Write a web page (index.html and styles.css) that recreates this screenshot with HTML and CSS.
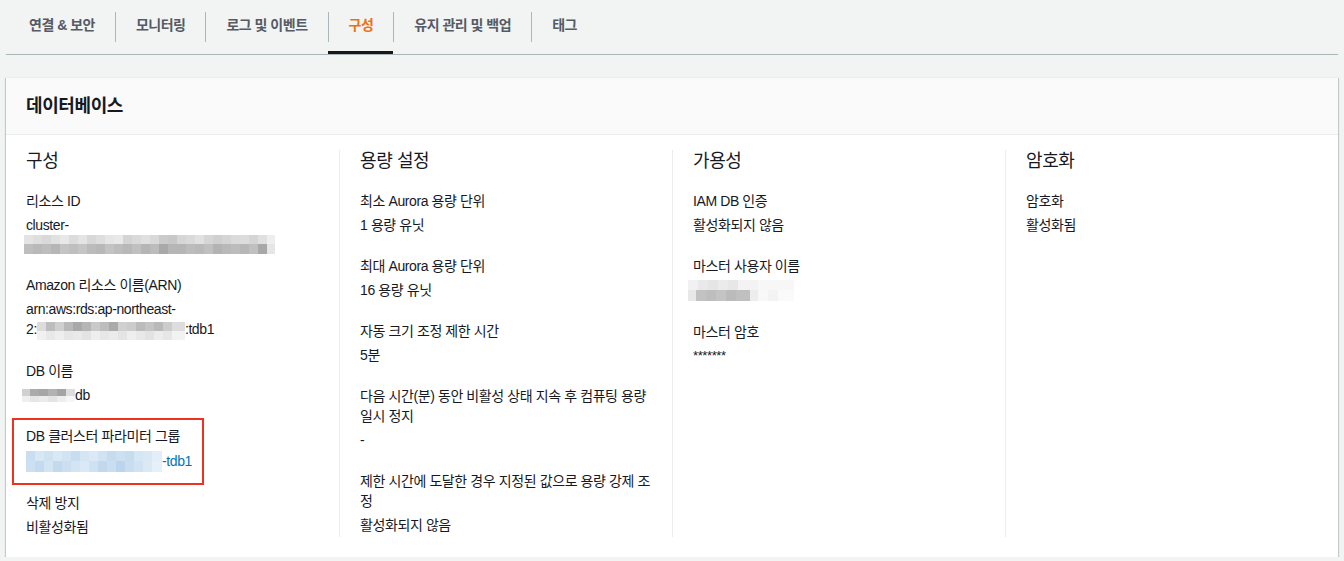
FILE: index.html
```html
<!DOCTYPE html>
<html lang="ko">
<head>
    <meta charset="UTF-8">
    <meta name="viewport" content="width=device-width, initial-scale=1.0">
    <title>구성</title>
    <link rel="stylesheet" href="styles.css">
</head>
<body>
    <div class="page">
        <nav class="tabs">
            <a class="tab"><span class="tab-label">연결 &amp; 보안</span></a>
            <a class="tab"><span class="tab-label">모니터링</span></a>
            <a class="tab"><span class="tab-label">로그 및 이벤트</span></a>
            <a class="tab active"><span class="tab-label">구성</span></a>
            <a class="tab"><span class="tab-label">유지 관리 및 백업</span></a>
            <a class="tab"><span class="tab-label">태그</span></a>
        </nav>

        <section class="panel">
            <header class="panel-header">
                <h2>데이터베이스</h2>
            </header>
            <div class="panel-body">

                <div class="column">
                    <h3 class="column-title">구성</h3>
                    <div class="field">
                        <div class="field-label">리소스 ID</div>
                        <div class="field-value">cluster-<span class="mask mask-cluster"></span></div>
                    </div>
                    <div class="field">
                        <div class="field-label">Amazon 리소스 이름(ARN)</div>
                        <div class="field-value">arn:aws:rds:ap-northeast-<br>2:<span class="mask mask-arn"></span>:tdb1</div>
                    </div>
                    <div class="field">
                        <div class="field-label">DB 이름</div>
                        <div class="field-value"><span class="mask mask-dbname"></span>db</div>
                    </div>
                    <div class="field highlight">
                        <div class="field-label">DB 클러스터 파라미터 그룹</div>
                        <div class="field-value"><a class="link"><span class="mask mask-param"></span>-tdb1</a></div>
                    </div>
                    <div class="field">
                        <div class="field-label">삭제 방지</div>
                        <div class="field-value">비활성화됨</div>
                    </div>
                </div>

                <div class="column">
                    <h3 class="column-title">용량 설정</h3>
                    <div class="field">
                        <div class="field-label">최소 Aurora 용량 단위</div>
                        <div class="field-value">1 용량 유닛</div>
                    </div>
                    <div class="field">
                        <div class="field-label">최대 Aurora 용량 단위</div>
                        <div class="field-value">16 용량 유닛</div>
                    </div>
                    <div class="field">
                        <div class="field-label">자동 크기 조정 제한 시간</div>
                        <div class="field-value">5분</div>
                    </div>
                    <div class="field">
                        <div class="field-label">다음 시간(분) 동안 비활성 상태 지속 후 컴퓨팅 용량 일시 정지</div>
                        <div class="field-value">-</div>
                    </div>
                    <div class="field">
                        <div class="field-label">제한 시간에 도달한 경우 지정된 값으로 용량 강제 조정</div>
                        <div class="field-value">활성화되지 않음</div>
                    </div>
                </div>

                <div class="column">
                    <h3 class="column-title">가용성</h3>
                    <div class="field">
                        <div class="field-label">IAM DB 인증</div>
                        <div class="field-value">활성화되지 않음</div>
                    </div>
                    <div class="field">
                        <div class="field-label">마스터 사용자 이름</div>
                        <div class="field-value"><span class="mask mask-user"></span></div>
                    </div>
                    <div class="field">
                        <div class="field-label">마스터 암호</div>
                        <div class="field-value password">*******</div>
                    </div>
                </div>

                <div class="column">
                    <h3 class="column-title">암호화</h3>
                    <div class="field">
                        <div class="field-label">암호화</div>
                        <div class="field-value">활성화됨</div>
                    </div>
                </div>

            </div>
        </section>
    </div>
</body>
</html>
```

FILE: styles.css
```css
*{
    margin: 0;
    padding: 0;
    box-sizing: border-box;
}
body {
    background-color: #f2f3f3;
    font-family: "Liberation Sans", "Noto Sans CJK KR", sans-serif;
    font-size: 14px;
    letter-spacing: -0.4px;
    color: #16191f;
    font-feature-settings: "palt";
}
.page {
    padding: 0 6px;
}

/* tabs */
.tabs {
    display: flex;
    padding: 8px 0 0 3px;
    border-bottom: 1px solid #aab7b8;
}
.tab {
    display: block;
    padding: 4px 0 12px;
    font-weight: bold;
    letter-spacing: -0.5px;
    color: #545b64;
    cursor: pointer;
}
.tab-label {
    display: block;
    padding: 2px 20px 6px;
    line-height: 22px;
    border-left: 1px solid #aab7b8;
}
.tab:first-child .tab-label {
    border-left: none;
}
.tab.active {
    color: #ec7211;
    box-shadow: inset 0 -3px 0 #16191f;
}

/* panel */
.panel {
    margin-top: 22px;
    background-color: #ffffff;
    border-top: 1px solid #eaeded;
    box-shadow: 0 1px 1px 0 rgba(0, 28, 36, 0.3), 1px 1px 1px 0 rgba(0, 28, 36, 0.15), -1px 1px 1px 0 rgba(0, 28, 36, 0.15);
}
.panel-header {
    background-color: #fafafa;
    padding: 17px 20px;
    border-bottom: 1px solid #eaeded;
}
.panel-header h2 {
    font-size: 18px;
    line-height: 22px;
    font-weight: bold;
}
.panel-body {
    display: grid;
    grid-template-columns: repeat(4, 1fr);
    padding: 15px 0 20px;
}
.column {
    padding: 0 20px;
    border-left: 1px solid #eaeded;
}
.column:first-child {
    border-left: none;
}
.column-title {
    font-size: 18px;
    line-height: 22px;
    font-weight: normal;
    margin-bottom: 19px;
}
.field {
    margin-bottom: 21px;
}
.field:last-child {
    margin-bottom: 0;
}
.field-label {
    line-height: 20px;
    margin-bottom: 4px;
}
.field-value {
    line-height: 20px;
}
.password {
    font-size: 13px;
}
.link {
    color: #0073bb;
    cursor: pointer;
}

/* annotation box */
.highlight {
    width: fit-content;
    margin: -8px 0 8px -14px;
    padding: 6px 10px 11px 12px;
    border: 2px solid #ee3220;
}
.highlight .field-label {
    margin-bottom: 5px;
}

/* blurred values */
.mask {
    display: inline-block;
}
.mask-cluster {
    display: block;
    width: 251px;
    height: 19px;
    margin-left: -2px;
    background:
        linear-gradient(90deg, #e4e4e4 0 9px, #dedede 9px 18px, #d9d9d9 18px 27px, #e1e1e1 27px 36px, #e8e8e8 36px 45px, #dcdcdc 45px 54px, #e4e4e4 54px 63px, #d8d8d8 63px 72px, #dedede 72px 81px, #e6e6e6 81px 90px, #e9e9e9 90px 99px, #d4d4d4 99px 108px, #dadada 108px 117px, #e0e0e0 117px 126px, #d9d9d9 126px 135px, #cbcbcb 135px 144px, #c8c8c8 144px 153px, #d6d6d6 153px 162px, #dadada 162px 171px, #e1e1e1 171px 180px, #d6d6d6 180px 189px, #d0d0d0 189px 198px, #d5d5d5 198px 207px, #dbdbdb 207px 216px, #dcdcdc 216px 225px, #d5d5d5 225px 234px, #e0e0e0 234px 243px, #eeeeee 243px 251px) top / 100% 9px no-repeat,
        linear-gradient(90deg, #bebebe 0 9px, #b9b9b9 9px 18px, #bdbdbd 18px 27px, #b6b6b6 27px 36px, #c4c4c4 36px 45px, #bfbfbf 45px 54px, #c5c5c5 54px 63px, #bbbbbb 63px 72px, #b8b8b8 72px 81px, #c3c3c3 81px 90px, #bdbdbd 90px 99px, #b8b8b8 99px 108px, #c0c0c0 108px 117px, #b5b5b5 117px 126px, #bcbcbc 126px 135px, #a9a9a9 135px 144px, #b6b6b6 144px 153px, #b5b5b5 153px 162px, #bcbcbc 162px 171px, #b9b9b9 171px 180px, #c0c0c0 180px 189px, #b3b3b3 189px 198px, #b9b9b9 198px 207px, #bcbcbc 207px 216px, #b7b7b7 216px 225px, #c0c0c0 225px 234px, #a8a8a8 234px 243px, #e6e6e6 243px 251px) bottom / 100% 10px no-repeat;
}
.mask-arn {
    width: 148px;
    height: 18px;
    vertical-align: -6px;
    background:
        linear-gradient(90deg, #dcdcdc 0 9px, #bdbdbd 9px 18px, #cfcfcf 18px 27px, #b9b9b9 27px 36px, #a9a9a9 36px 45px, #b5b5b5 45px 54px, #c9c9c9 54px 63px, #bdbdbd 63px 72px, #aaaaaa 72px 81px, #d0d0d0 81px 90px, #cbcbcb 90px 99px, #bbbbbb 99px 108px, #c4c4c4 108px 117px, #b9b9b9 117px 126px, #cccccc 126px 135px, #dddddd 135px 148px) top / 100% 9px no-repeat,
        linear-gradient(90deg, #f0f0f0 0 9px, #e8e8e8 9px 18px, #eeeeee 18px 27px, #e6e6e6 27px 36px, #e9e9e9 36px 45px, #e3e3e3 45px 54px, #eeeeee 54px 63px, #e7e7e7 63px 72px, #ebebeb 72px 81px, #e4e4e4 81px 90px, #eeeeee 90px 99px, #e8e8e8 99px 108px, #e2e2e2 108px 117px, #ececec 117px 126px, #e6e6e6 126px 135px, #f2f2f2 135px 148px) bottom / 100% 9px no-repeat;
}
.mask-dbname {
    width: 53px;
    height: 13px;
    margin-left: -4px;
    vertical-align: -2px;
    background:
        linear-gradient(90deg, #d0d0d0 0 8px, #ababab 8px 17px, #a6a6a6 17px 26px, #b2b2b2 26px 35px, #a4a4a4 35px 44px, #dddddd 44px 53px) top / 100% 7px no-repeat,
        linear-gradient(90deg, #efefef 0 8px, #e6e6e6 8px 17px, #ebebeb 17px 26px, #e4e4e4 26px 35px, #eeeeee 35px 44px, #f6f6f6 44px 53px) bottom / 100% 6px no-repeat;
}
.mask-param {
    width: 136px;
    height: 21px;
    vertical-align: -6px;
    background:
        linear-gradient(90deg, #c9def0 0 9px, #d7e7f4 9px 18px, #cfe2f2 18px 27px, #d9e8f5 27px 36px, #d2e4f3 36px 45px, #c8ddef 45px 54px, #d4e5f3 54px 63px, #dae9f5 63px 72px, #d0e3f2 72px 81px, #c5dbef 81px 90px, #cde0f1 90px 99px, #c6dcef 99px 108px, #d5e6f4 108px 117px, #d9e8f5 117px 126px, #e3eef8 126px 136px) top / 100% 10px no-repeat,
        linear-gradient(90deg, #cde0f1 0 9px, #c4daee 9px 18px, #d3e4f3 18px 27px, #c2d9ee 27px 36px, #cbdff1 36px 45px, #d3e4f3 45px 54px, #dae9f5 54px 63px, #cfe2f2 63px 72px, #c1d8ed 72px 81px, #cadef0 81px 90px, #bcd5ec 90px 99px, #c8ddef 99px 108px, #d1e3f2 108px 117px, #dbe9f5 117px 126px, #e6f0f8 126px 136px) bottom / 100% 11px no-repeat;
}
.mask-user {
    width: 106px;
    height: 21px;
    margin-left: -5px;
    vertical-align: -6px;
    background:
        linear-gradient(90deg, #f1f1f1 0 10px, #e9e9e9 10px 20px, #e5e5e5 20px 30px, #ebebeb 30px 40px, #e7e7e7 40px 50px, #f3f3f3 50px 70px, #f7f7f7 70px 106px) top / 100% 10px no-repeat,
        linear-gradient(90deg, #e8e8e8 0 8px, #c2c2c2 8px 18px, #bebebe 18px 28px, #c4c4c4 28px 38px, #bbbbbb 38px 48px, #c0c0c0 48px 62px, #ededed 62px 70px, #f8f8f8 70px 80px, #f3f3f3 80px 90px, #fafafa 90px 106px) bottom / 100% 11px no-repeat;
}
```
